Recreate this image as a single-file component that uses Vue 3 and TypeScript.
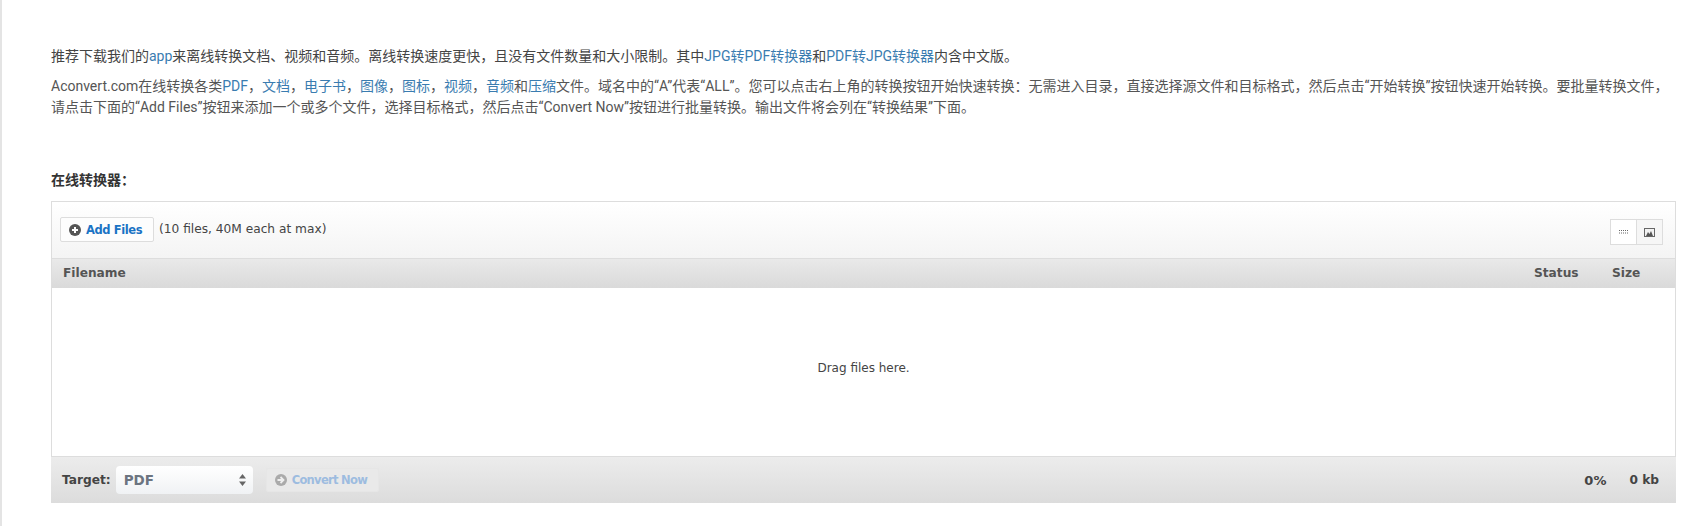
<script setup lang="ts">
const typeLinks: string[] = ['文档', '电子书', '图像', '图标', '视频', '音频']
</script>

<template>
  <div class="page">
    <p class="intro first">推荐下载我们的<a>app</a>来离线转换文档、视频和音频。离线转换速度更快，且没有文件数量和大小限制。其中<a>JPG转PDF转换器</a>和<a>PDF转JPG转换器</a>内含中文版。</p>
    <p class="intro">Aconvert.com在线转换各类<a>PDF</a>，<template v-for="(t, i) in typeLinks" :key="t"><a>{{ t }}</a>{{ i < typeLinks.length - 1 ? '，' : '' }}</template>和<a>压缩</a>文件。域名中的“A”代表“ALL”。您可以点击右上角的转换按钮开始快速转换：无需进入目录，直接选择源文件和目标格式，然后点击“开始转换”按钮快速开始转换。要批量转换文件，请点击下面的“Add Files”按钮来添加一个或多个文件，选择目标格式，然后点击“Convert Now”按钮进行批量转换。输出文件将会列在“转换结果”下面。</p>
    <h4 class="title">在线转换器：</h4>
    <section class="uploader">
      <div class="toolbar">
        <button class="add-btn" type="button">
          <svg class="ico" viewBox="0 0 12 12"><circle cx="6" cy="6" r="6" fill="#555"/><path d="M6 3v6M3 6h6" stroke="#fff" stroke-width="2"/></svg>
          <span>Add Files</span>
        </button>
        <span class="limit">(10 files, 40M each at max)</span>
        <div class="views">
          <button class="view" type="button">
            <svg width="9" height="4" viewBox="0 0 9 4"><path d="M0 .5h9M0 3h9" stroke="#666" stroke-width="1" stroke-dasharray="1 1"/></svg>
          </button>
          <button class="view active" type="button">
            <svg width="11" height="9" viewBox="0 0 11 9"><rect x=".5" y=".5" width="10" height="8" fill="#f2f2f2" stroke="#666"/><path d="M2 8l2-4 1.500 2L7 3l2 5z" fill="#555"/></svg>
          </button>
        </div>
      </div>
      <div class="head">
        <span class="col-name">Filename</span>
        <span class="col-status">Status</span>
        <span class="col-size">Size</span>
      </div>
      <div class="drop">Drag files here.</div>
      <div class="footer">
        <label class="target">Target:</label>
        <div class="select">
          <span>PDF</span>
          <svg width="7" height="12" viewBox="0 0 7 12"><path d="M3.500 0L7 4.500H0zM3.500 12L0 7.500h7z" fill="#666"/></svg>
        </div>
        <button class="convert" type="button">
          <svg class="ico" viewBox="0 0 12 12"><circle cx="6" cy="6" r="6" fill="#aaa"/><path d="M2.500 6h5M5.500 3l3 3-3 3" stroke="#eee" stroke-width="1.800" fill="none"/></svg>
          <span>Convert Now</span>
        </button>
        <span class="pct">0%</span>
        <span class="kb">0 kb</span>
      </div>
    </section>
  </div>
</template>

<style scoped>
.page {
  box-sizing: border-box;
  height: 526px;
  padding: 46px 23px 0 49px;
  border-left: 2px solid #e4e4e4;
  font-family: Roboto, "Noto Sans CJK SC", sans-serif;
  font-size: 14px;
  color: #333;
}
.intro {
  margin: 0 0 9px;
  line-height: 21px;
  color: #555;
}
.intro.first { color: #444; }
.intro a { color: #3a7cb0; }
.title {
  margin: 52px 0 0;
  font-size: 14px;
  line-height: 21px;
  font-weight: 700;
  color: #333;
}
.uploader {
  margin-top: 10px;
  border: 1px solid #ddd;
  border-bottom: 0;
  font-family: "DejaVu Sans", Verdana, sans-serif;
  font-size: 12.2px;
}
.toolbar {
  display: flex;
  align-items: center;
  height: 57px;
  padding: 0 12px 0 8px;
  box-sizing: border-box;
  border-bottom: 1px solid #ddd;
  background: linear-gradient(#fff, #f4f4f4);
}
.add-btn {
  display: flex;
  align-items: center;
  gap: 5px;
  box-sizing: border-box;
  height: 25px;
  width: 94px;
  margin-top: -1px;
  padding: 0 8px;
  border: 1px solid #ddd;
  border-radius: 2px;
  background: #fdfdfd;
  font: 700 11.5px "DejaVu Sans", Verdana, sans-serif;
  letter-spacing: -0.4px;
  color: #1a73c4;
  white-space: nowrap;
}
.ico { width: 12px; height: 12px; flex: none; }
.limit { margin-left: 5px; color: #444; margin-top: -2px; }
.views { display: flex; margin-left: auto; margin-top: 4px; }
.view {
  display: flex;
  align-items: center;
  justify-content: center;
  box-sizing: border-box;
  width: 27px;
  height: 26px;
  padding: 0;
  border: 1px solid #ddd;
  background: #fff;
}
.view.active { margin-left: -1px; background: #f6f6f6; }
.head {
  display: flex;
  align-items: center;
  height: 29px;
  padding-bottom: 1px;
  box-sizing: border-box;
  background: linear-gradient(#e9e9e9, #dadada);
  font-weight: 700;
  font-size: 12.2px;
  color: #555;
}
.col-name { flex: 1; padding-left: 11px; }
.col-status { width: 78px; }
.col-size { width: 63px; }
.drop {
  display: flex;
  align-items: center;
  justify-content: center;
  height: 169px;
  padding-bottom: 8px;
  box-sizing: border-box;
  border-bottom: 1px solid #ddd;
  background: #fff;
  font-size: 12px;
  color: #444;
}
.footer {
  display: flex;
  align-items: center;
  height: 46px;
  padding: 0 17px 0 11px;
  margin: 0 -1px;
  background: linear-gradient(#ececec, #dcdcdc);
  font-weight: 700;
  color: #444;
}
.target { margin-right: 5px; }
.select {
  display: flex;
  align-items: center;
  justify-content: space-between;
  box-sizing: border-box;
  width: 137px;
  height: 28px;
  padding: 0 7px 0 8px;
  border-radius: 4px;
  background: linear-gradient(#fff, #f0f2f4);
  font-size: 13.5px;
  color: #6c7480;
}
.convert {
  display: flex;
  align-items: center;
  gap: 5px;
  box-sizing: border-box;
  width: 113px;
  height: 24px;
  margin-left: 13px;
  padding: 0 8px;
  border: 1px solid #e6e6e6;
  border-radius: 2px;
  background: #e9e9e9;
  font: 700 11.5px "DejaVu Sans", Verdana, sans-serif;
  letter-spacing: -0.7px;
  color: #9dbce0;
  white-space: nowrap;
}
.pct { margin-left: auto; font-size: 13px; }
.kb { margin-left: 23px; }
</style>
